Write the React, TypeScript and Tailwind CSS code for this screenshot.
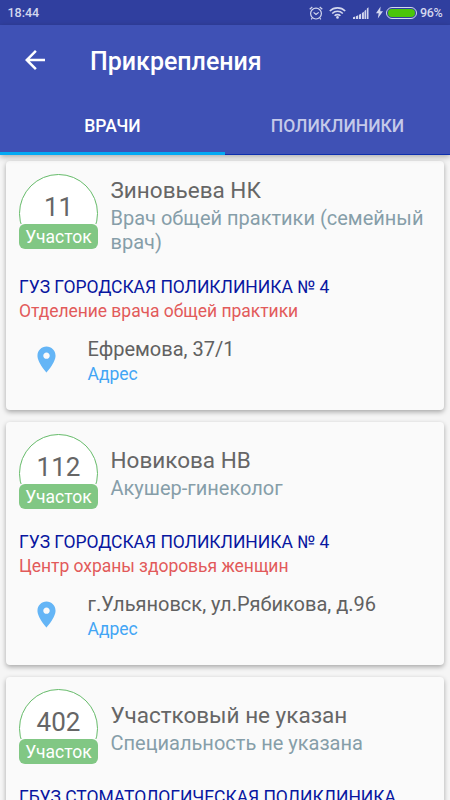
type Doctor = {
  area: string;
  name: string;
  specialty: string;
  clinic: string;
  department: string;
  address: string;
};

const doctors: Doctor[] = [
  {
    area: '11',
    name: 'Зиновьева НК',
    specialty: 'Врач общей практики (семейный врач)',
    clinic: 'ГУЗ ГОРОДСКАЯ ПОЛИКЛИНИКА № 4',
    department: 'Отделение врача общей практики',
    address: 'Ефремова, 37/1',
  },
  {
    area: '112',
    name: 'Новикова НВ',
    specialty: 'Акушер-гинеколог',
    clinic: 'ГУЗ ГОРОДСКАЯ ПОЛИКЛИНИКА № 4',
    department: 'Центр охраны здоровья женщин',
    address: 'г.Ульяновск, ул.Рябикова, д.96',
  },
  {
    area: '402',
    name: 'Участковый не указан',
    specialty: 'Специальность не указана',
    clinic: 'ГБУЗ СТОМАТОЛОГИЧЕСКАЯ ПОЛИКЛИНИКА',
    department: '',
    address: '',
  },
];

function StatusBar() {
  return (
    <div className="flex h-[25px] shrink-0 items-center bg-[#303f9f] px-[7.5px] text-[#d3d7ee]">
      <span className="pt-px text-[12.5px] font-medium">18:44</span>
      <div className="ml-auto flex items-center">
        {/* alarm */}
        <svg className="h-[14px] w-[14px]" viewBox="0 0 14 14" fill="none" stroke="currentColor" strokeWidth="1.2">
          <circle cx="7" cy="7.6" r="5.4" />
          <path d="M4.6 6.4 7 8.5l2.7-2.1M.7 3.2 3.3 1M13.3 3.2 10.7 1M3.2 12l-1 1.3M10.8 12l1 1.3" />
        </svg>
        {/* wifi */}
        <svg className="ml-[6px] h-[13px] w-[17px]" viewBox="0 0 17 13" fill="none" stroke="currentColor" strokeWidth="1.6">
          <path d="M.8 5a11 11 0 0 1 15.4 0M3.2 7.5a7.5 7.5 0 0 1 10.6 0M5.6 9.8a4.1 4.1 0 0 1 5.8 0" />
          <circle cx="8.5" cy="11.4" r="1.3" fill="currentColor" stroke="none" />
        </svg>
        {/* signal */}
        <svg className="ml-[7px] mt-px h-[12px] w-[16px]" viewBox="0 0 16 12" fill="currentColor">
          <path d="M0 10.2 2.2 9.5V12H0zM3 9.2l2.2-1V12H3zM6 7.8l2-1.1V12H6zM8.9 6l2-1.2V12h-2zM11.5 4l1.7-1.4V12h-1.7zM13.9 1.6 15.5.3V12h-1.6z" />
        </svg>
        {/* charging */}
        <svg className="ml-[7px] h-[13px] w-[7px]" viewBox="0 0 7 13" fill="currentColor">
          <path d="M4.6.5 0 7.3h2.7L1.8 12.5 7 5.2H4.2z" />
        </svg>
        <div className="ml-[2.5px] h-[12px] w-[31px] rounded-full border border-[#d3d7ee] p-px">
          <div className="h-full w-full rounded-full bg-[#4ac40a]" />
        </div>
        <span className="ml-[3px] pt-px text-[12.5px] font-medium tracking-[-0.3px]">96%</span>
      </div>
    </div>
  );
}

function Header() {
  return (
    <header className="relative z-10 shrink-0 bg-[#3f51b5] shadow-[0_2px_6px_rgba(0,0,0,0.3)]">
      <div className="flex h-[72px] items-center pl-5">
        <svg className="mb-[2px] h-[30px] w-[30px]" viewBox="0 0 24 24" fill="white">
          <path d="M20 11H7.83l5.59-5.59L12 4l-8 8 8 8 1.41-1.41L7.83 13H20v-2z" />
        </svg>
        <h1 className="ml-10 pt-[2px] text-[25px] font-medium text-white">Прикрепления</h1>
      </div>
      <nav className="flex h-[58px] text-[17.5px] font-medium">
        <button className="flex-1 border-b-[3px] border-[#03a9f4] pt-[3px] text-white">ВРАЧИ</button>
        <button className="flex-1 border-b border-[#0d2fae] pt-px text-[#c5cae9]">ПОЛИКЛИНИКИ</button>
      </nav>
    </header>
  );
}

function AreaBadge({ area }: { area: string }) {
  return (
    <div className="flex h-[75px] w-[79px] shrink-0 flex-col overflow-hidden">
      <div className="h-[50px] overflow-hidden">
        <div className="h-[79px] rounded-full border border-[#66bb6a] bg-white pt-[16px] text-center text-[26px] leading-[32px] text-[#666]">
          {area}
        </div>
      </div>
      <div className="h-[25px] rounded-md bg-[#81c784] pt-px text-center text-[17.5px] leading-[25px] text-white">
        Участок
      </div>
    </div>
  );
}

function DoctorCard({ doctor }: { doctor: Doctor }) {
  return (
    <article className="rounded bg-[#fafafa] px-[13px] pb-6 pt-[12.7px] shadow-[0_2px_5px_rgba(0,0,0,0.32)]">
      <div className="flex min-h-[75px]">
        <AreaBadge area={doctor.area} />
        <div className="ml-[12.5px] flex flex-1 flex-col justify-center pb-[0.5px] pt-[3.5px]">
          <h2 className="text-[22.5px] leading-[26px] text-[#666]">{doctor.name}</h2>
          <p className="mt-[2.7px] text-[20px] leading-6 text-[#869ea9]">{doctor.specialty}</p>
        </div>
      </div>
      <div className="mt-[20.3px] whitespace-nowrap text-[17.5px] leading-6 tracking-[-0.04px]">
        <p className="text-[#0816a0]">{doctor.clinic}</p>
        <p className="text-[#e25a5a]">{doctor.department}</p>
      </div>
      {doctor.address && (
        <div className="mt-[14px] flex">
          <svg className="ml-3 mt-[7px] h-[31px] w-[31px]" viewBox="0 0 24 24" fill="#64b5f6">
            <path d="M12 2C8.13 2 5 5.13 5 9c0 5.25 7 13 7 13s7-7.75 7-13c0-3.87-3.13-7-7-7zm0 9.5c-1.38 0-2.5-1.12-2.5-2.5s1.12-2.5 2.5-2.5 2.5 1.12 2.5 2.5-1.12 2.5-2.5 2.5z" />
          </svg>
          <div className="ml-[25.5px]">
            <p className="text-[20px] leading-[25px] text-[#616161]">{doctor.address}</p>
            <p className="text-[17.5px] leading-6 text-[#42a5f5]">Адрес</p>
          </div>
        </div>
      )}
    </article>
  );
}

export default function App() {
  return (
    <div className="flex h-[800px] w-[450px] flex-col overflow-hidden bg-[#f5f5f5] font-['Roboto',sans-serif]">
      <StatusBar />
      <Header />
      <main className="flex flex-col gap-[12px] px-1.5 pt-1.5">
        {doctors.map((doctor) => (
          <DoctorCard key={doctor.area} doctor={doctor} />
        ))}
      </main>
    </div>
  );
}
